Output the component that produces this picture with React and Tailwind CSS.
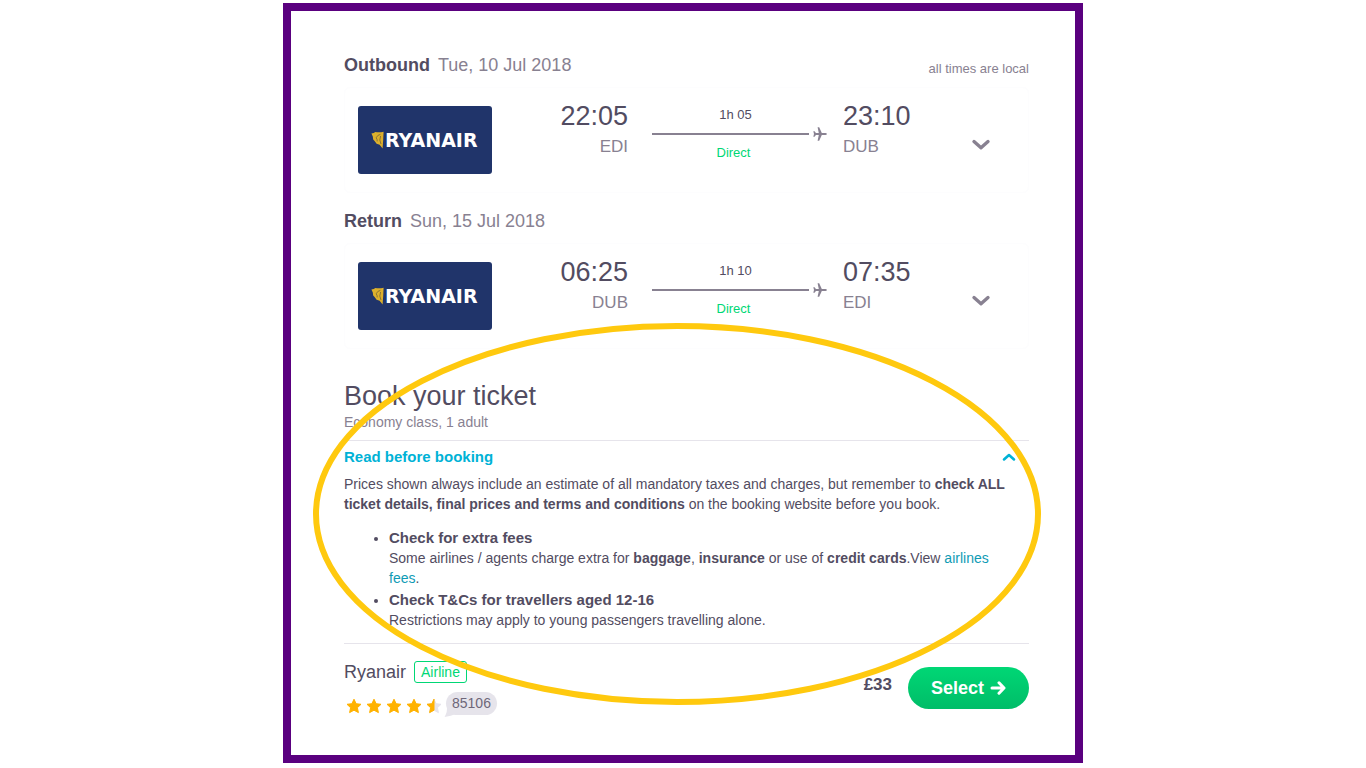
import { useState } from 'react'

const flights = [
  {
    label: 'Outbound',
    date: 'Tue, 10 Jul 2018',
    depart: '22:05',
    from: 'EDI',
    arrive: '23:10',
    to: 'DUB',
    duration: '1h 05',
    note: 'all times are local',
  },
  {
    label: 'Return',
    date: 'Sun, 15 Jul 2018',
    depart: '06:25',
    from: 'DUB',
    arrive: '07:35',
    to: 'EDI',
    duration: '1h 10',
  },
]

const STAR = 'M8 1.2 10.1 5.7 15 6.3 11.4 9.7 12.4 14.6 8 12.2 3.6 14.6 4.6 9.7 1 6.3 5.9 5.7Z'

function RyanairLogo() {
  return (
    <div className="my-1.5 flex h-[68px] w-[134px] shrink-0 items-center rounded-[3px] bg-[#20346a] pl-[13px]">
      <svg viewBox="0 0 13 18" className="h-[18px] w-[13px] shrink-0" aria-hidden="true">
        <path d="M0.4 2.4 Q3 2.2 4.4 1 Q8 1.8 12.6 0.8 L12.2 9 L11.6 17.4 L8.6 13.8 L5.6 12.8 L3.8 10.2 L2.2 8.6 L1.8 5.6 Z" fill="#dcb02c" />
        <path d="M9.4 3.4 Q6.4 3.8 5.2 6.8 Q6.4 8.4 6.2 10.4 M9.6 5 L8.8 9 L10 13" fill="none" stroke="#8a7434" strokeWidth="1" />
      </svg>
      <span className="pl-px font-['DejaVu_Sans',sans-serif] text-[19px] leading-5 font-bold text-white">RYANAIR</span>
    </div>
  )
}

function Plane() {
  return (
    <svg viewBox="0 0 14 14" className="h-[14px] w-[14px] shrink-0" aria-hidden="true">
      <path
        d="M14 7 Q13.6 6.1 12.4 6.1 L8.8 6.1 L6.2 0.3 L4.6 0.3 L5.8 6.1 L2.9 6.1 L1.6 4.3 L0.3 4.3 L1 7 L0.3 9.7 L1.6 9.7 L2.9 7.9 L5.8 7.9 L4.6 13.7 L6.2 13.7 L8.8 7.9 L12.4 7.9 Q13.6 7.9 14 7Z"
        fill="#888191"
      />
    </svg>
  )
}

function Flight({ flight }) {
  const [open, setOpen] = useState(false)

  return (
    <section className="mb-4">
      <div className="mb-2.5 flex items-center justify-between">
        <h2 className="text-[18px] leading-6 text-[#888191]">
          <strong className="mr-2 font-bold text-[#524c61]">{flight.label}</strong>
          {flight.date}
        </h2>
        {flight.note && <span className="pt-2 text-[13px] leading-4 text-[#888191]">{flight.note}</span>}
      </div>

      <div className="flex items-center rounded-md border border-[#fdfdfe] px-[13px] py-3">
        <RyanairLogo />
        <div className="w-[136px] self-start text-right">
          <p className="text-[27px] leading-8 text-[#524c61]">{flight.depart}</p>
          <p className="text-[17px] leading-[30px] text-[#888191]">{flight.from}</p>
        </div>
        <div className="ml-6 w-[175px] self-start pt-[7px]">
          <p className="pr-2 text-center text-[13px] leading-4 text-[#524c61]">{flight.duration}</p>
          <div className="my-1 flex items-center gap-1">
            <div className="h-0.5 flex-1 bg-[#888191]"></div>
            <Plane />
          </div>
          <p className="pr-3 text-center text-[13px] leading-4 text-[#00d775]">Direct</p>
        </div>
        <div className="ml-4 flex-1 self-start">
          <p className="text-[27px] leading-8 text-[#524c61]">{flight.arrive}</p>
          <p className="text-[17px] leading-[30px] text-[#888191]">{flight.to}</p>
        </div>
        <button
          type="button"
          aria-label="Show flight details"
          aria-expanded={open}
          onClick={() => setOpen(!open)}
          className="mr-6 pt-2.5"
        >
          <svg viewBox="0 0 20 12" className="h-3 w-5" fill="none" stroke="#888191" strokeWidth="3.4" strokeLinecap="round" strokeLinejoin="round">
            <path d="M3 2.6 10 8.8 17 2.6" />
          </svg>
        </button>
      </div>
    </section>
  )
}

function Rating() {
  return (
    <div className="flex items-start">
      <div className="flex gap-1 pt-1.5 pl-0.5" role="img" aria-label="4.5 out of 5 stars">
        {[1, 2, 3, 4].map((n) => (
          <svg key={n} viewBox="0 0 16 16" className="h-4 w-4">
            <path d={STAR} fill="#ffb200" stroke="#ffb200" strokeWidth="1" strokeLinejoin="round" />
          </svg>
        ))}
        <svg viewBox="0 0 16 16" className="h-4 w-4">
          <path d={STAR} fill="#e6e4eb" stroke="#e6e4eb" strokeWidth="1" strokeLinejoin="round" />
          <path d="M8 1.2V12.2L3.6 14.6 4.6 9.7 1 6.3 5.9 5.7Z" fill="#ffb200" stroke="#ffb200" strokeWidth="1" strokeLinejoin="round" />
        </svg>
      </div>
      <span className="relative ml-1 rounded-full bg-[#e6e4eb] px-1.5 text-[14px] leading-[23px] text-[#6e6779]">
        <svg viewBox="0 0 12 12" className="absolute -bottom-0.5 -left-0.5 h-3 w-3" aria-hidden="true">
          <path d="M3 0 Q3.6 7 0.6 12 Q7 11 12 9 Z" fill="#e6e4eb" />
        </svg>
        <span className="relative">85106</span>
      </span>
    </div>
  )
}

export default function App() {
  const [showInfo, setShowInfo] = useState(true)

  return (
    <div className="bg-white pt-[3px] font-['Liberation_Sans',Arial,sans-serif] text-[#524c61]">
      <main className="relative mx-auto max-w-[800px] border-8 border-[#5a007f] bg-white pt-[42px] pr-[46px] pb-10 pl-[53px]">
        {flights.map((flight) => (
          <Flight key={flight.label} flight={flight} />
        ))}

        <section>
          <h1 className="pt-[15px] text-[27px] leading-8">Book your ticket</h1>
          <p className="text-[14px] leading-5 text-[#888191]">Economy class, 1 adult</p>

          <div className="mt-2 border-y border-[#e6e4eb] pt-[7px] pb-[13px]">
            <button
              type="button"
              aria-expanded={showInfo}
              onClick={() => setShowInfo(!showInfo)}
              className="flex w-full items-center justify-between pr-3 text-[15px] leading-[18px] font-bold text-[#00b2d6]"
            >
              Read before booking
              <svg viewBox="0 0 16 10" className="h-2.5 w-4" fill="none" stroke="#00b2d6" strokeWidth="2.6" strokeLinecap="round" strokeLinejoin="round">
                <path d="M3 7.4 8 3 13 7.4" />
              </svg>
            </button>

            {showInfo && (
              <div className="text-[14px] leading-5">
                <p className="mt-2">
                  Prices shown always include an estimate of all mandatory taxes and charges, but remember to{' '}
                  <strong>check ALL ticket details, final prices and terms and conditions</strong> on the booking website
                  before you book.
                </p>
                <ul className="mt-3.5 list-disc space-y-0.5 pr-4 pl-[45px]">
                  <li>
                    <strong className="text-[15px]">Check for extra fees</strong>
                    <br />
                    Some airlines / agents charge extra for <strong>baggage</strong>, <strong>insurance</strong> or use of{' '}
                    <strong>credit cards</strong>.View <a href="#fees" className="text-[#0f9bb5]">airlines fees</a>.
                  </li>
                  <li>
                    <strong className="text-[15px]">Check T&amp;Cs for travellers aged 12-16</strong>
                    <br />
                    Restrictions may apply to young passengers travelling alone.
                  </li>
                </ul>
              </div>
            )}
          </div>

          <div className="flex items-start justify-between pt-4">
            <div>
              <div className="mb-2 flex items-center gap-2">
                <span className="text-[18px] leading-6">Ryanair</span>
                <span className="rounded-[3px] border border-[#00d775] px-1.5 text-[14px] leading-5 text-[#00d775]">Airline</span>
              </div>
              <Rating />
            </div>
            <div className="flex items-start gap-4 pt-[7px]">
              <span className="text-[17px] leading-9 font-bold">£33</span>
              <button
                type="button"
                className="flex h-[42px] w-[121px] items-center justify-center gap-1.5 rounded-full bg-linear-to-b from-[#00d775] to-[#00bd68] text-[18px] leading-6 font-bold text-white"
              >
                Select
                <svg viewBox="0 0 16 16" className="h-4 w-4" fill="none" stroke="currentColor" strokeWidth="3" strokeLinecap="round" strokeLinejoin="round" aria-hidden="true">
                  <path d="M2 8H13.6M9 2.8 14 8 9 13.2" />
                </svg>
              </button>
            </div>
          </div>
        </section>

        {/* highlight ring drawn over the booking notes */}
        <svg viewBox="0 0 728 382" className="pointer-events-none absolute top-[312px] left-[22px] h-[382px] w-[728px]" aria-hidden="true">
          <ellipse cx="364" cy="191" rx="361" ry="188" fill="none" stroke="#ffc90e" strokeWidth="6" />
        </svg>
      </main>
    </div>
  )
}
